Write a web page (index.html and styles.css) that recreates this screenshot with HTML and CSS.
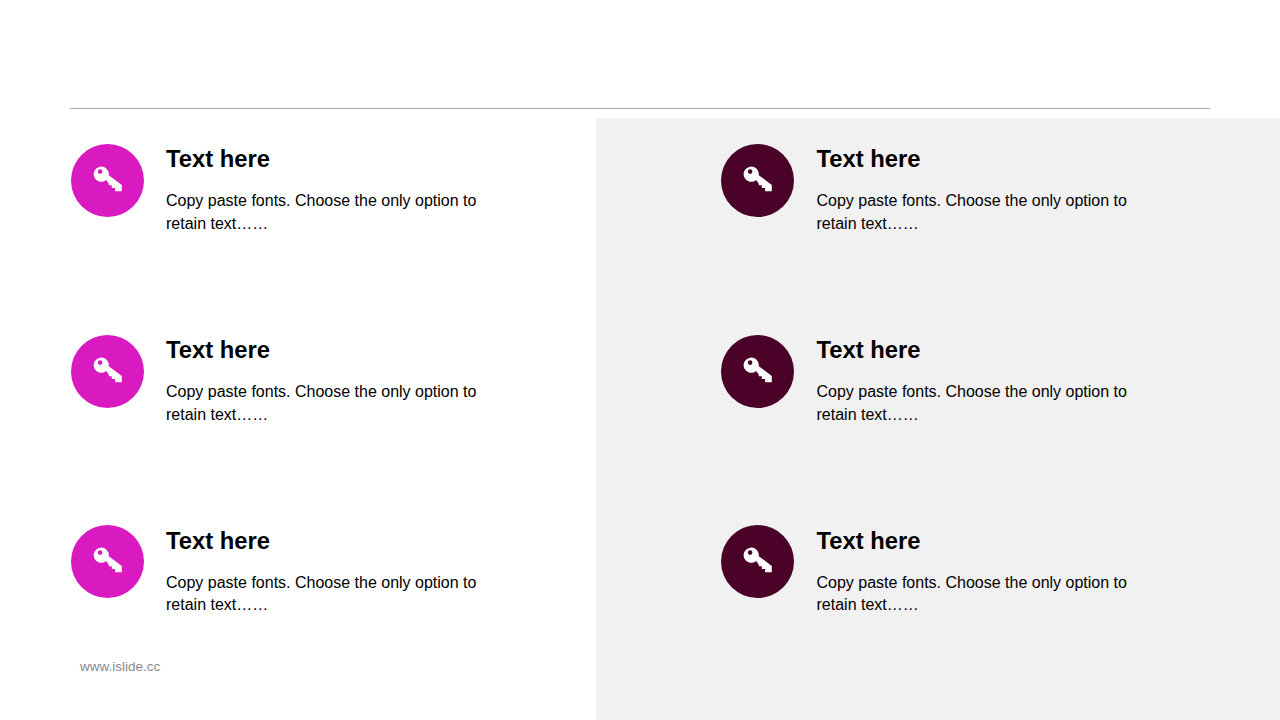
FILE: index.html
```html
<!DOCTYPE html>
<html lang="en">
<head>
<meta charset="utf-8">
<title>Text here</title>
<link rel="stylesheet" href="styles.css">
</head>
<body>
<svg class="defs" width="0" height="0" aria-hidden="true">
  <symbol id="key" viewBox="-0.6 0 73 73">
    <path fill="#fff" fill-rule="evenodd" d="M37.200 31.200L50.200 41V47.300H43.500V44.100H40.200V41.200H37.200V39.800L34.600 36A7.600 7.600 0 1 1 37.200 31.200ZM28.500 25.300a2.300 2.300 0 1 0 0 4.600 2.300 2.300 0 0 0 0-4.600Z"/>
  </symbol>
</svg>
<main class="slide">
  <div class="panel"></div>
  <hr class="rule">
  <section class="grid">
    <article class="item">
      <span class="badge badge-pink"><svg class="key"><use href="#key"/></svg></span>
      <div class="copy"><h2>Text here</h2><p>Copy paste fonts. Choose the only option to retain text……</p></div>
    </article>
    <article class="item">
      <span class="badge badge-plum"><svg class="key"><use href="#key"/></svg></span>
      <div class="copy"><h2>Text here</h2><p>Copy paste fonts. Choose the only option to retain text……</p></div>
    </article>
    <article class="item">
      <span class="badge badge-pink"><svg class="key"><use href="#key"/></svg></span>
      <div class="copy"><h2>Text here</h2><p>Copy paste fonts. Choose the only option to retain text……</p></div>
    </article>
    <article class="item">
      <span class="badge badge-plum"><svg class="key"><use href="#key"/></svg></span>
      <div class="copy"><h2>Text here</h2><p>Copy paste fonts. Choose the only option to retain text……</p></div>
    </article>
    <article class="item">
      <span class="badge badge-pink"><svg class="key"><use href="#key"/></svg></span>
      <div class="copy"><h2>Text here</h2><p>Copy paste fonts. Choose the only option to retain text……</p></div>
    </article>
    <article class="item">
      <span class="badge badge-plum"><svg class="key"><use href="#key"/></svg></span>
      <div class="copy"><h2>Text here</h2><p>Copy paste fonts. Choose the only option to retain text……</p></div>
    </article>
  </section>
  <footer class="foot">www.islide.cc</footer>
</main>
</body>
</html>
```

FILE: styles.css
```css
* { box-sizing: border-box; }
html, body { margin: 0; padding: 0; background: #fff; }
.defs { position: absolute; }
.slide {
  position: relative;
  width: 1280px;
  height: 720px;
  overflow: hidden;
  padding: 108px 70px 0;
  font-family: "Liberation Sans", Arial, sans-serif;
  color: #000;
  background: #fff;
}
.panel {
  position: absolute;
  left: 596px;
  top: 118px;
  right: 0;
  bottom: 0;
  background-color: #f0f0f0;
  background-image:
    radial-gradient(circle at 1px 1px, rgba(255,255,255,.16) 0 1px, transparent 1.2px),
    radial-gradient(circle at 2px 3px, rgba(255,255,255,.1) 0 1px, transparent 1.2px);
  background-size: 3px 3px, 5px 4px;
}
.rule {
  position: relative;
  margin: 0;
  width: 1140px;
  height: 1px;
  border: 0;
  background: #a9a9a9;
}
.grid {
  position: relative;
  display: grid;
  grid-template-columns: 650.5px 1fr;
  grid-auto-rows: 190.7px;
  padding-top: 35px;
  padding-left: .5px;
}
.item { display: flex; align-items: flex-start; gap: 22.500px; }
.badge {
  flex: none;
  width: 73px;
  height: 73px;
  border-radius: 50%;
  display: block;
}
.badge-pink { background: #d91ac1; }
.badge-plum { background: #4a0229; }
.key { display: block; width: 73px; height: 73px; }
.copy { width: 330px; }
h2 {
  margin: 0;
  padding-top: 1.300px;
  font-size: 23.800px;
  line-height: 28px;
  font-weight: 700;
}
p {
  margin: 17px 0 0;
  font-size: 16px;
  line-height: 22.700px;
}
.foot {
  position: absolute;
  left: 80px;
  top: 659px;
  font-size: 13.500px;
  line-height: 16px;
  color: #8a8a8a;
}
```
